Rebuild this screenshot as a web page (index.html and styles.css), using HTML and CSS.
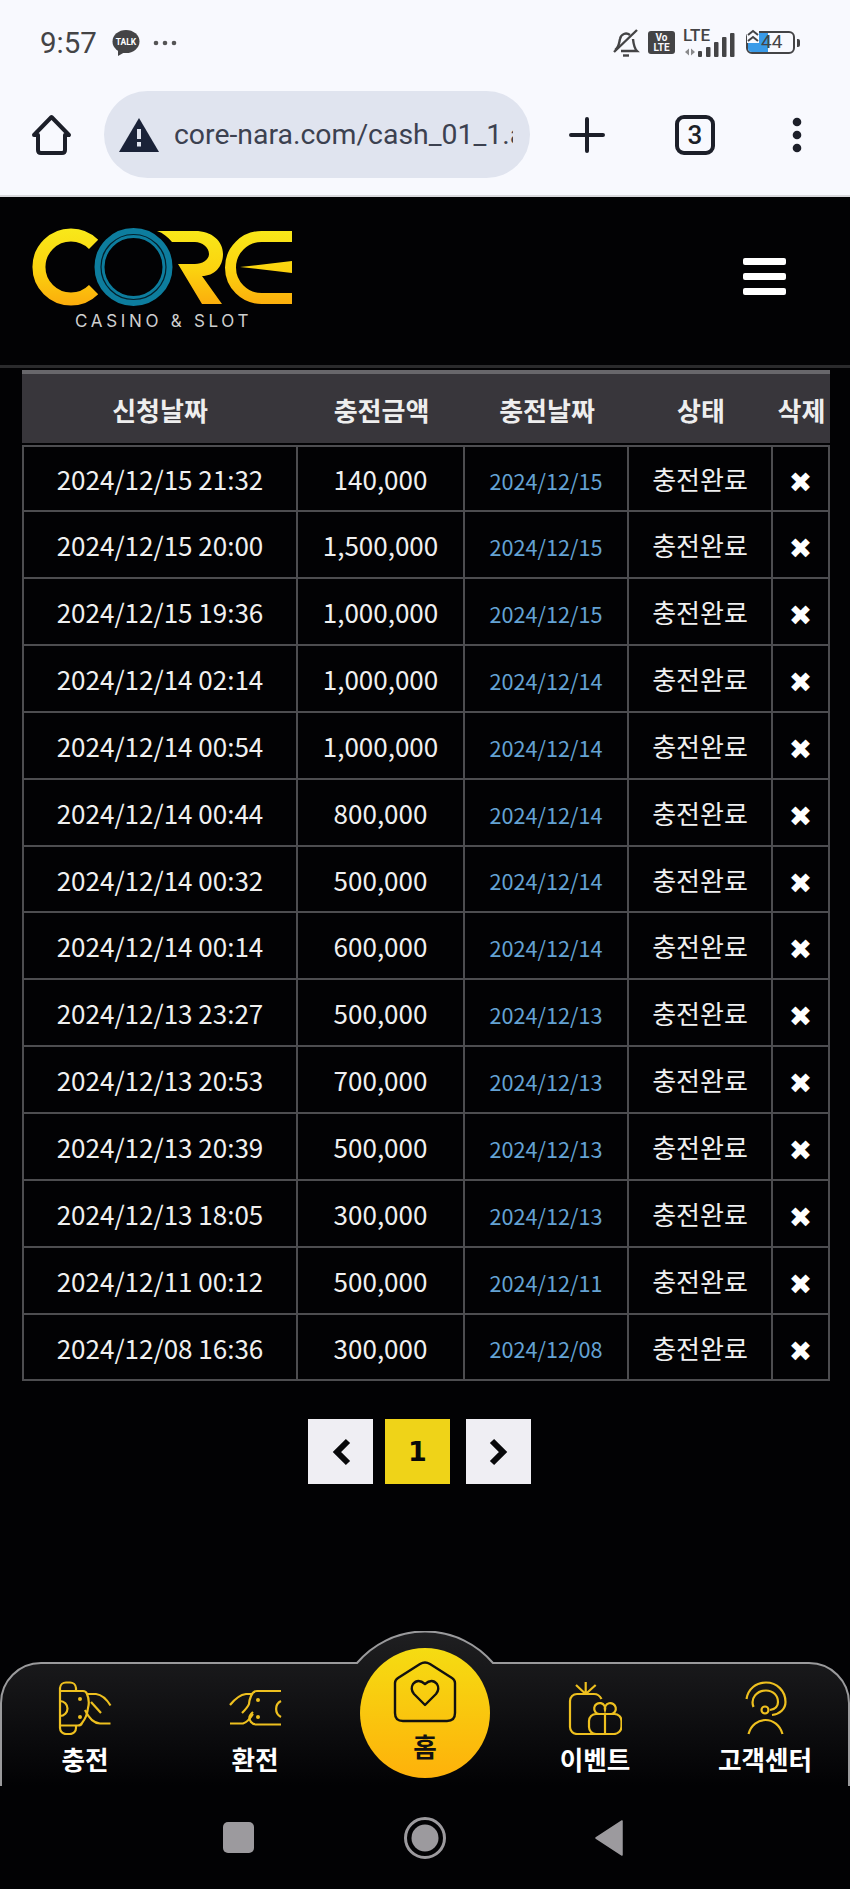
FILE: index.html
```html
<!DOCTYPE html>
<html lang="ko">

<head>
    <meta charset="UTF-8">
    <meta name="viewport" content="width=device-width, initial-scale=1.0">
    <title>충전내역</title>
    <link rel="stylesheet" href="styles.css">
</head>

<body>
    <div class="phone-top">
        <div class="status-bar">
            <div class="status-left">
                <span class="clock">9:57</span>
                <svg class="kakao" width="28" height="28" viewBox="0 0 28 28">
                    <ellipse cx="14" cy="12.5" rx="13.5" ry="11.5" fill="#444446" />
                    <path d="M6 20 L6 27 L13 23Z" fill="#444446" />
                    <text x="14" y="15.5" text-anchor="middle" class="kakao-text">TALK</text>
                </svg>
                <svg width="24" height="6" viewBox="0 0 24 6" class="more-dots">
                    <circle cx="3" cy="3" r="2.3" fill="#555" />
                    <circle cx="12" cy="3" r="2.3" fill="#555" />
                    <circle cx="21" cy="3" r="2.3" fill="#555" />
                </svg>
            </div>
            <div class="status-right">
                <svg class="bell" width="28" height="30" viewBox="0 0 28 30" fill="none" stroke="#444446" stroke-width="2.4">
                    <path d="M3 22 C7 20 7 15 8 11 C9 6 14 4 18 7" />
                    <path d="M21 11 C21.500 16 22 20 25 23 H9" />
                    <path d="M2 24 L25 2" />
                    <path d="M11 27.500 H17" />
                </svg>
                <div class="volte"><span>Vo</span><span>LTE</span></div>
                <div class="signal">
                    <span class="lte">LTE</span>
                    <svg width="52" height="24" viewBox="0 0 52 24">
                        <path d="M2 19 L6 15.500 V22.500Z M8 15.500 L12 19 L8 22.500Z" fill="#8a8a8c" />
                        <rect x="15" y="18" width="4" height="6" rx="1" fill="#444446" />
                        <rect x="23" y="14" width="4.500" height="10" rx="1" fill="#444446" />
                        <rect x="31" y="9" width="4.500" height="15" rx="1" fill="#444446" />
                        <rect x="39" y="4" width="4.500" height="20" rx="1" fill="#444446" />
                        <rect x="47" y="0" width="4.500" height="24" rx="1" fill="#444446" />
                    </svg>
                </div>
                <div class="battery">
                    <svg class="charge" width="12" height="14" viewBox="0 0 12 14" fill="none" stroke="#444446" stroke-width="2">
                        <path d="M1 6 L6 2 L11 6" />
                        <path d="M1 12 L6 8 L11 12" />
                    </svg>
                    <div class="battery-body">
                        <div class="battery-fill"></div>
                        <span class="battery-num">44</span>
                    </div>
                    <div class="battery-nub"></div>
                </div>
            </div>
        </div>
        <div class="chrome-bar">
            <svg width="42" height="42" viewBox="0 0 42 42" fill="none" stroke="#1c1f29" stroke-width="4" stroke-linejoin="round" class="chrome-home">
                <path d="M3 21 L20.500 3 L38 21 H34 V36 Q34 39 31 39 H10 Q7 39 7 36 V21Z" />
            </svg>
            <div class="address">
                <svg width="40" height="34" viewBox="0 0 40 34">
                    <path d="M20 0 L40 34 H0Z" fill="#1a2238" />
                    <rect x="18" y="11" width="4" height="10" fill="#e0e4ef" />
                    <rect x="18" y="24" width="4" height="4.500" fill="#e0e4ef" />
                </svg>
                <span class="url">core-nara.com/cash_01_1.a</span>
            </div>
            <svg class="chrome-plus" width="36" height="36" viewBox="0 0 36 36" stroke="#1c1f29" stroke-width="4" stroke-linecap="round">
                <path d="M18 2 V34 M2 18 H34" />
            </svg>
            <div class="tab-count">3</div>
            <svg class="chrome-menu" width="10" height="36" viewBox="0 0 10 36" fill="#1c1f29">
                <circle cx="5" cy="5" r="4.300" />
                <circle cx="5" cy="18" r="4.300" />
                <circle cx="5" cy="31" r="4.300" />
            </svg>
        </div>
    </div>

    <header class="site-header">
        <div class="logo">
            <svg width="265" height="82" viewBox="0 0 265 82" fill="none">
                <defs>
                    <linearGradient id="gold" gradientUnits="userSpaceOnUse" x1="0" y1="2" x2="0" y2="80">
                        <stop offset="0" stop-color="#f8e81a" />
                        <stop offset="0.5" stop-color="#fbd40f" />
                        <stop offset="1" stop-color="#fbab0c" />
                    </linearGradient>
                </defs>
                <path d="M63.600 17.400 A32 32 0 1 0 63.600 62.600" stroke="url(#gold)" stroke-width="13" />
                <circle cx="103.500" cy="40" r="40.500" fill="#020204" />
                <circle cx="103.500" cy="40" r="34" stroke="#0d7d9e" stroke-width="10" />
                <circle cx="103.500" cy="40" r="32.500" stroke="#03202c" stroke-width="1.200" />
                <path d="M127 4 H165 C182 4 193 14 193 27 C193 40 184 49 172 49 L192 77 H172 L148 37 H165 C172 37 179 33 179 27 C179 20 172 15 165 15 H142 C138 10 133 6 127 4Z" fill="url(#gold)" />
                <path d="M262 9.500 H231.500 A31 31 0 0 0 231.500 71.500 H262" stroke="url(#gold)" stroke-width="11" />
                <path d="M210 40 L262 34 V46Z" fill="url(#gold)" />
            </svg>
            <div class="logo-sub">CASINO &amp; SLOT</div>
        </div>
        <div class="burger"><span></span><span></span><span></span></div>
    </header>

    <main class="content">
        <table class="cash-table">
            <colgroup>
                <col class="c1">
                <col class="c2">
                <col class="c3">
                <col class="c4">
                <col class="c5">
            </colgroup>
            <thead>
                <tr>
                    <th>신청날짜</th>
                    <th>충전금액</th>
                    <th>충전날짜</th>
                    <th>상태</th>
                    <th>삭제</th>
                </tr>
            </thead>
            <tbody>
                <tr><td>2024/12/15 21:32</td><td>140,000</td><td class="date">2024/12/15</td><td>충전완료</td><td class="del">✖</td></tr>
                <tr><td>2024/12/15 20:00</td><td>1,500,000</td><td class="date">2024/12/15</td><td>충전완료</td><td class="del">✖</td></tr>
                <tr><td>2024/12/15 19:36</td><td>1,000,000</td><td class="date">2024/12/15</td><td>충전완료</td><td class="del">✖</td></tr>
                <tr><td>2024/12/14 02:14</td><td>1,000,000</td><td class="date">2024/12/14</td><td>충전완료</td><td class="del">✖</td></tr>
                <tr><td>2024/12/14 00:54</td><td>1,000,000</td><td class="date">2024/12/14</td><td>충전완료</td><td class="del">✖</td></tr>
                <tr><td>2024/12/14 00:44</td><td>800,000</td><td class="date">2024/12/14</td><td>충전완료</td><td class="del">✖</td></tr>
                <tr><td>2024/12/14 00:32</td><td>500,000</td><td class="date">2024/12/14</td><td>충전완료</td><td class="del">✖</td></tr>
                <tr><td>2024/12/14 00:14</td><td>600,000</td><td class="date">2024/12/14</td><td>충전완료</td><td class="del">✖</td></tr>
                <tr><td>2024/12/13 23:27</td><td>500,000</td><td class="date">2024/12/13</td><td>충전완료</td><td class="del">✖</td></tr>
                <tr><td>2024/12/13 20:53</td><td>700,000</td><td class="date">2024/12/13</td><td>충전완료</td><td class="del">✖</td></tr>
                <tr><td>2024/12/13 20:39</td><td>500,000</td><td class="date">2024/12/13</td><td>충전완료</td><td class="del">✖</td></tr>
                <tr><td>2024/12/13 18:05</td><td>300,000</td><td class="date">2024/12/13</td><td>충전완료</td><td class="del">✖</td></tr>
                <tr><td>2024/12/11 00:12</td><td>500,000</td><td class="date">2024/12/11</td><td>충전완료</td><td class="del">✖</td></tr>
                <tr><td>2024/12/08 16:36</td><td>300,000</td><td class="date">2024/12/08</td><td>충전완료</td><td class="del">✖</td></tr>
            </tbody>
        </table>

        <div class="pager">
            <a class="page-btn prev">
                <svg width="20" height="28" viewBox="0 0 20 28" fill="none" stroke="#08080a" stroke-width="6">
                    <path d="M17 3 L6 14 L17 25" />
                </svg>
            </a>
            <a class="page-btn on">1</a>
            <a class="page-btn next">
                <svg width="20" height="28" viewBox="0 0 20 28" fill="none" stroke="#08080a" stroke-width="6">
                    <path d="M3 3 L14 14 L3 25" />
                </svg>
            </a>
        </div>
    </main>

    <nav class="bottom-nav">
        <svg class="nav-bg" width="850" height="155" viewBox="0 0 850 155">
            <defs>
                <linearGradient id="navfill" x1="0" y1="0" x2="0" y2="1">
                    <stop offset="0" stop-color="#1f1f21" />
                    <stop offset="1" stop-color="#020204" />
                </linearGradient>
            </defs>
            <path d="M1 155 V72 A40 40 0 0 1 41 32 H357 A89 89 0 0 1 493 32 H809 A40 40 0 0 1 849 72 V155" fill="url(#navfill)" stroke="#9a9a9c" stroke-width="2" />
        </svg>
        <a class="nav-item">
            <svg class="nav-icon" width="54" height="54" viewBox="0 0 54 54">
                <path d="M2 10 V7 A6 6 0 0 1 8 1.500 H12 A6 6 0 0 1 18 7 V10 M2 10 V45 M2 10 H25 Q28 10 29 13 Q32 20 30 27 Q29 36 24 42 Q23 44.500 20 44.500 H2 M2 45 V47 A6 6 0 0 0 8 53 H12 A6 6 0 0 0 18 47 V45" />
                <path d="M2 20 A7.500 7.500 0 0 1 2 35" />
                <path d="M29 13 H38 Q46 14 52.500 24.500" />
                <path d="M33 21 L43 32" />
                <path d="M27 29 Q33 42 42 42.500 H52.500" />
                <circle class="dot" cx="22" cy="18" r="2" />
                <circle class="dot" cx="22" cy="36" r="2" />
            </svg>
            <span>충전</span>
        </a>
        <a class="nav-item">
            <svg class="nav-icon" width="54" height="54" viewBox="0 0 54 54">
                <path d="M53 10 H29 Q25 10 23 15 Q21 20 21 23 Q20 26 14 32" />
                <path d="M53 43.500 H29 Q25 43.500 23 41 Q19 36 25 31" />
                <path d="M2 24 Q10 14 18 13 H25" />
                <path d="M2 42.500 H15 Q20 41 25 33" />
                <path d="M53 20 A9 9 0 0 0 53 36" />
                <circle class="dot" cx="30" cy="19" r="2" />
                <circle class="dot" cx="30" cy="36" r="2" />
            </svg>
            <span>환전</span>
        </a>
        <a class="nav-item home">
            <div class="home-circle">
                <svg width="64" height="62" viewBox="0 0 64 62" fill="none" stroke="#111" stroke-width="2.400" stroke-linejoin="round">
                    <path d="M2 22 Q2 19 5 17 L27 3 Q32 0 37 3 L59 17 Q62 19 62 22 V52 Q62 60 54 60 H10 Q2 60 2 52Z" />
                    <path d="M32 44 L21 33 Q17 28 20 23 Q25 17 32 23 Q39 17 44 23 Q47 28 43 33Z" />
                </svg>
                <span>홈</span>
            </div>
        </a>
        <a class="nav-item">
            <svg class="nav-icon" width="54" height="54" viewBox="0 0 54 54">
                <path d="M33.500 18 Q31 13 26 13 H9 A7 7 0 0 0 2 20 V46 A7 7 0 0 0 9 53 H46 A7.500 7.500 0 0 0 53.500 45.500 V40 A7 7 0 0 0 46.500 33 H28 A7 7 0 0 0 21 40 V46 A7 7 0 0 0 28 53" />
                <path d="M37 33 V53" />
                <path d="M37 33 H31 A5.500 5.500 0 1 1 37 29 A5.500 5.500 0 1 1 43.500 33 H37" />
                <path d="M17.700 13 V1 M17.700 13 L8 4 M17.700 13 L27.700 4" />
            </svg>
            <span>이벤트</span>
        </a>
        <a class="nav-item">
            <svg class="nav-icon" width="54" height="54" viewBox="0 0 54 54">
                <path d="M8.500 18 C10 8 18 1.500 28 1.500 C39 1.500 47.500 10 47.500 21 C47.500 28 42 33 34 34" />
                <path d="M15.500 26 C12 17 19 9.500 28 9.500 C35 9.500 40 14.500 40 21 C40 25 38 28 32 29" />
                <circle cx="27" cy="29" r="3.500" />
                <path d="M10.500 53 C13 44 20 39 27.500 39 C35 39 42 44 44.500 53" />
            </svg>
            <span>고객센터</span>
        </a>
    </nav>

    <div class="android-bar">
        <div class="soft-square"></div>
        <svg width="42" height="42" viewBox="0 0 42 42">
            <circle cx="21" cy="21" r="19.500" fill="none" stroke="#9c9a9e" stroke-width="3" />
            <circle cx="21" cy="21" r="13.500" fill="#9c9a9e" />
        </svg>
        <svg width="28" height="36" viewBox="0 0 28 36">
            <path d="M27 1 V35 L1 18Z" fill="#9c9a9e" stroke="#9c9a9e" stroke-width="1.500" stroke-linejoin="round" />
        </svg>
    </div>
</body>

</html>
```

FILE: styles.css
```css
* {
    padding: 0;
    margin: 0;
    box-sizing: border-box;
}

body {
    width: 850px;
    height: 1889px;
    overflow: hidden;
    display: flex;
    flex-direction: column;
    background-color: #020204;
    color: #f2f2f2;
    font-family: "Noto Sans CJK KR", "Noto Sans", sans-serif;
}

/* 상단 폰 상태바 + 브라우저 */
.phone-top {
    height: 197px;
    background-color: #f8f9fe;
    border-bottom: 2px solid #d9d9dd;
}

.status-bar {
    height: 90px;
    display: flex;
    justify-content: space-between;
    align-items: center;
    padding: 0 50px 5px 40px;
}

.status-left,
.status-right {
    display: flex;
    align-items: center;
}

.clock {
    font-family: Roboto, sans-serif;
    font-size: 29.500px;
    color: #444446;
    margin-right: 15px;
}

.kakao-text {
    font-family: Roboto, sans-serif;
    font-size: 8.5px;
    font-weight: 700;
    fill: #fff;
}

.more-dots {
    margin-left: 13px;
}

.bell {
    margin-right: 8px;
}

.volte {
    width: 27px;
    height: 23px;
    background-color: #444446;
    border-radius: 3px;
    color: #f8f9fe;
    font-family: Roboto, sans-serif;
    font-size: 10px;
    font-weight: 700;
    line-height: 10px;
    text-align: center;
    padding-top: 2px;
    margin-right: 8px;
}

.volte span {
    display: block;
}

.signal {
    position: relative;
    width: 52px;
    height: 28px;
    display: flex;
    align-items: flex-end;
}

.lte {
    position: absolute;
    left: 0;
    top: -2px;
    font-family: Roboto, sans-serif;
    font-size: 17px;
    font-weight: 500;
    line-height: 17px;
    color: #444446;
}

.battery {
    position: relative;
    display: flex;
    align-items: center;
    margin-left: 11px;
}

.charge {
    position: absolute;
    left: 1px;
    top: -2px;
    background-color: #f8f9fe;
    z-index: 1;
}

.battery-body {
    position: relative;
    width: 49px;
    height: 23px;
    border: 2px solid #444446;
    border-radius: 6px;
    overflow: hidden;
}

.battery-fill {
    width: 20px;
    height: 100%;
    background-color: #3a9be8;
}

.battery-num {
    position: absolute;
    left: 13px;
    top: -3px;
    font-family: Roboto, sans-serif;
    font-size: 19px;
    line-height: 24px;
    color: #444446;
}

.battery-nub {
    width: 3px;
    height: 8px;
    background-color: #444446;
    border-radius: 0 2px 2px 0;
    margin-left: 2px;
}

.chrome-bar {
    display: flex;
    align-items: center;
    height: 89px;
    padding-left: 31px;
}

.address {
    width: 426px;
    height: 87px;
    margin-left: 31px;
    padding-left: 15px;
    display: flex;
    align-items: center;
    gap: 15px;
    background-color: #e0e4ef;
    border-radius: 44px;
}

.address svg {
    flex: none;
}

.url {
    width: 339px;
    overflow: hidden;
    white-space: nowrap;
    font-family: Roboto, sans-serif;
    font-size: 28.400px;
    color: #3c4150;
}

.chrome-plus {
    margin-left: 39px;
}

.tab-count {
    width: 40px;
    height: 40px;
    margin-left: 70px;
    border: 4px solid #1c1f29;
    border-radius: 9px;
    font-family: Roboto, sans-serif;
    font-size: 26px;
    font-weight: 500;
    line-height: 32px;
    text-align: center;
    color: #1c1f29;
}

.chrome-menu {
    margin-left: 77px;
}

/* 사이트 헤더 */
.site-header {
    height: 171px;
    display: flex;
    justify-content: space-between;
    align-items: center;
    padding: 0 64px 0 30px;
    border-bottom: 3px solid #2a2a2c;
}

.logo {
    height: 112px;
    padding-top: 2px;
}

.logo-sub {
    margin: -4px 0 0 45px;
    font-family: Inter, sans-serif;
    font-size: 17px;
    font-weight: 400;
    line-height: 22px;
    letter-spacing: 3.700px;
    color: #cfcfcf;
    white-space: nowrap;
}

.burger {
    display: flex;
    flex-direction: column;
    gap: 8px;
    margin-bottom: 10px;
}

.burger span {
    display: block;
    width: 43px;
    height: 7px;
    background-color: #fff;
    border-radius: 2px;
}

/* 테이블 */
.content {
    padding: 2px 20px 0 22px;
}

.cash-table {
    width: 808px;
    table-layout: fixed;
    border-collapse: separate;
    border-spacing: 0;
}

.c1 { width: 276px; }
.c2 { width: 167px; }
.c3 { width: 164px; }
.c4 { width: 144px; }
.c5 { width: 57px; }

.cash-table th {
    height: 75px;
    padding-top: 1px;
    background-color: #38363b;
    background-clip: padding-box;
    border-top: 4px solid #68676b;
    border-bottom: 2px solid #020204;
    font-size: 26px;
    font-weight: 700;
    color: #eeeeee;
}

/* 콜론이 위로 뜨지 않게 SC 폰트 사용 */
.cash-table td {
    height: 67px;
    padding: 0;
    text-align: center;
    font-family: "Noto Sans CJK SC", "Noto Sans", sans-serif;
    font-feature-settings: "locl" 0;
    font-size: 26px;
    color: #f0f0f0;
    border-right: 2.500px solid #4d4d50;
    border-bottom: 2.500px solid #4d4d50;
}

.cash-table tbody tr:nth-child(7n) td {
    height: 66px;
}

.cash-table tbody tr:first-child td {
    border-top: 2px solid #4d4d50;
}

.cash-table td:first-child {
    border-left: 2px solid #4d4d50;
}

.cash-table .date {
    font-size: 21.600px;
    color: #64a2d4;
    padding-top: 3px;
}

.cash-table .del {
    font-family: "DejaVu Sans", sans-serif;
    font-size: 28px;
    line-height: 1;
    color: #fff;
    padding-top: 9px;
}

.pager {
    display: flex;
    margin: 38px 0 0 286px;
}

.page-btn {
    width: 65px;
    height: 65px;
    display: flex;
    justify-content: center;
    align-items: center;
    background-color: #efeef3;
    color: #08080a;
    font-family: "DejaVu Sans", sans-serif;
    font-size: 27px;
    font-weight: 700;
}

.page-btn.on {
    margin: 0 16px 0 12px;
    background-color: #efd318;
}

/* 하단 메뉴 */
.bottom-nav {
    position: relative;
    height: 155px;
    margin-top: auto;
    display: grid;
    grid-template-columns: repeat(5, 1fr);
    padding-top: 50px;
}

.nav-bg {
    position: absolute;
    left: 0;
    top: 0;
}

.nav-item {
    position: relative;
    display: flex;
    flex-direction: column;
    align-items: center;
    font-size: 25.600px;
    font-weight: 700;
    line-height: 32px;
    color: #fff;
}

.nav-item span {
    margin-top: 8px;
}

.nav-icon {
    display: block;
    fill: none;
    stroke: #eec01f;
    stroke-width: 2.200;
}

.nav-icon .dot {
    fill: #eec01f;
    stroke: none;
}

.home-circle {
    position: absolute;
    top: -33px;
    width: 130px;
    height: 130px;
    padding-top: 13px;
    display: flex;
    flex-direction: column;
    align-items: center;
    border-radius: 50%;
    background: linear-gradient(#f5dc12, #feb10a);
    color: #111;
}

.home-circle span {
    margin-top: 7px;
    line-height: 32px;
}

.android-bar {
    height: 103px;
    display: flex;
    align-items: center;
    gap: 149.500px;
    padding-left: 223px;
}

.soft-square {
    width: 31px;
    height: 31px;
    background-color: #9c9a9e;
    border-radius: 5px;
}
```
